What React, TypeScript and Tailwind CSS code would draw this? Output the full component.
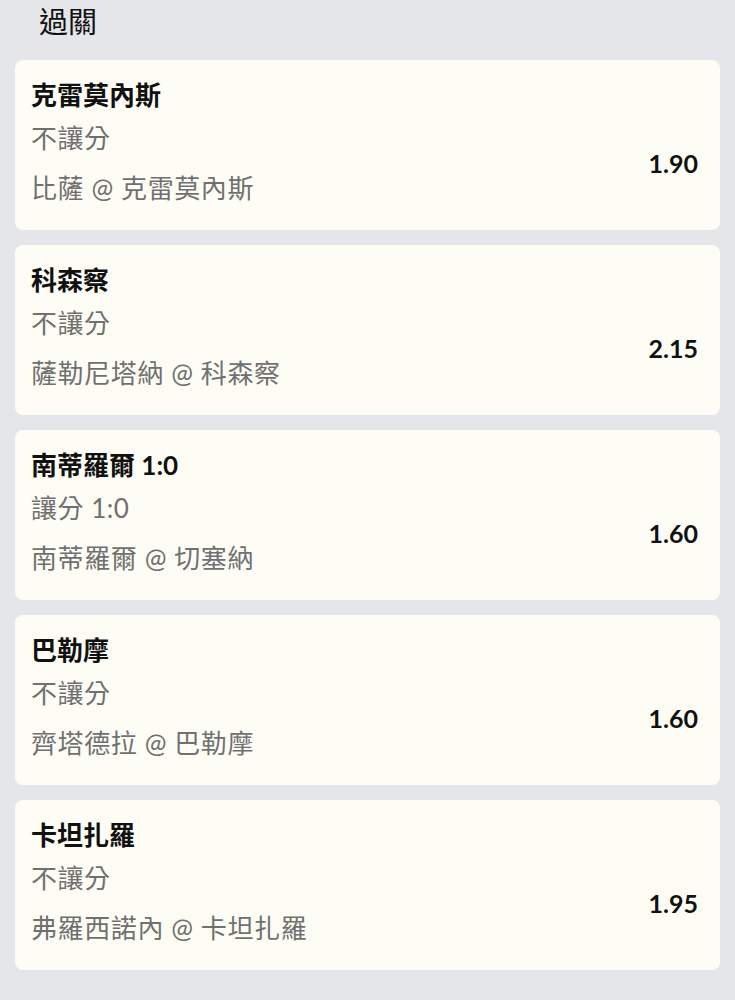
const bets = [
  { team: "克雷莫內斯", type: "不讓分", match: "比薩 @ 克雷莫內斯", odds: "1.90" },
  { team: "科森察", type: "不讓分", match: "薩勒尼塔納 @ 科森察", odds: "2.15" },
  { team: "南蒂羅爾 1:0", type: "讓分 1:0", match: "南蒂羅爾 @ 切塞納", odds: "1.60" },
  { team: "巴勒摩", type: "不讓分", match: "齊塔德拉 @ 巴勒摩", odds: "1.60" },
  { team: "卡坦扎羅", type: "不讓分", match: "弗羅西諾內 @ 卡坦扎羅", odds: "1.95" },
];

const font = { fontFamily: "Lato, 'Noto Sans CJK TC', sans-serif" };

const BetCard = ({ team, type, match, odds }: (typeof bets)[number]) => (
  <div className="h-[170px] rounded-lg bg-[#fdfdf5] pl-[16px] pr-[22px] flex justify-between">
    <div className="pt-[17px]">
      <div className="text-[26px] leading-[36px] font-bold text-[#111]">{team}</div>
      <div className="mt-[7px] text-[26px] leading-[36px] tracking-[0.5px] text-[#707070]">{type}</div>
      <div className="mt-[14px] text-[26px] leading-[36px] tracking-[0.6px] text-[#707070]">{match}</div>
    </div>
    <div className="pt-[88px] text-[25px] leading-[30px] font-bold text-[#111]">{odds}</div>
  </div>
);

export default function App() {
  return (
    <div className="min-h-[1000px] bg-[#e5e6e9]" style={font}>
      <div className="h-[60px] pl-[39px] pt-[4px] text-[29px] leading-[36px] text-[#111]">過關</div>
      <div className="px-[15px] flex flex-col gap-[15px]">
        {bets.map((b) => (
          <BetCard key={b.match} {...b} />
        ))}
      </div>
    </div>
  );
}
